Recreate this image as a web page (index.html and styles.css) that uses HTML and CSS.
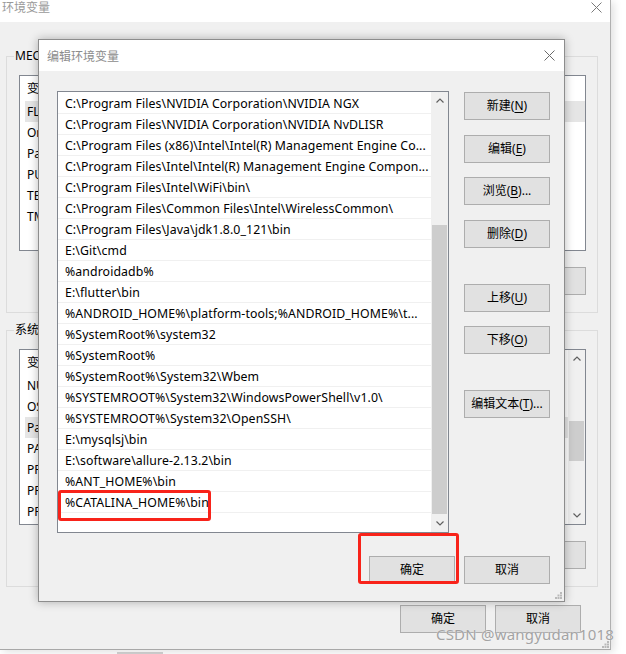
FILE: index.html
```html
<!DOCTYPE html>
<html lang="zh-CN">
<head>
<meta charset="utf-8">
<title>编辑环境变量</title>
<link rel="stylesheet" href="styles.css">
</head>
<body>
<div class="screen">
  <div class="bgwin">
    <div class="bg-titlebar">
      <span class="bg-title">环境变量</span>
      <svg class="close-x" width="11" height="11" viewBox="0 0 11 11"><path d="M0.5 0.5L10.5 10.5M10.5 0.5L0.5 10.5" stroke="#7a7a7a" stroke-width="1" fill="none"/></svg>
    </div>
    <div class="bg-body">
      <fieldset class="group">
        <legend class="group-label">MECHREVO 的用户变量(U)</legend>
        <div class="lv">
          <div class="lv-rows">
            <div class="lv-head">变量</div>
            <div class="lv-row selected">FLUTTER_STORAGE_BASE_URL</div>
            <div class="lv-row">OneDrive</div>
            <div class="lv-row">Path</div>
            <div class="lv-row">PUB_HOSTED_URL</div>
            <div class="lv-row">TEMP</div>
            <div class="lv-row">TMP</div>
          </div>
        </div>
        <div class="group-btns">
          <button class="btn">新建(N)...</button>
          <button class="btn">编辑(E)...</button>
          <button class="btn">删除(D)</button>
        </div>
      </fieldset>
      <fieldset class="group group-sys">
        <legend class="group-label">系统变量(S)</legend>
        <div class="lv">
          <div class="lv-rows">
            <div class="lv-head">变量</div>
            <div class="lv-row">NUMBER_OF_PROCESSORS</div>
            <div class="lv-row">OS</div>
            <div class="lv-row selected">Path</div>
            <div class="lv-row">PATHEXT</div>
            <div class="lv-row">PROCESSOR_ARCHITECTURE</div>
            <div class="lv-row">PROCESSOR_IDENTIFIER</div>
            <div class="lv-row">PROCESSOR_LEVEL</div>
          </div>
          <div class="scrollbar">
            <div class="sb-arrow"><svg width="8" height="5" viewBox="0 0 8 5"><path d="M0.5 4.5L4 1L7.5 4.5" stroke="#606060" stroke-width="1.2" fill="none"/></svg></div>
            <div class="sb-track"><div class="sb-thumb thumb-sys"></div></div>
            <div class="sb-arrow"><svg width="8" height="5" viewBox="0 0 8 5"><path d="M0.5 0.5L4 4L7.5 0.5" stroke="#606060" stroke-width="1.2" fill="none"/></svg></div>
          </div>
        </div>
        <div class="group-btns">
          <button class="btn">新建(W)...</button>
          <button class="btn">编辑(I)...</button>
          <button class="btn">删除(L)</button>
        </div>
      </fieldset>
      <div class="bg-footer">
        <button class="btn">确定</button>
        <button class="btn">取消</button>
      </div>
    </div>
    <svg class="grip bg-grip" width="7" height="7" viewBox="0 0 7 7"><g fill="#b9b9b9"><rect x="5" y="0" width="2" height="2"/><rect x="2.5" y="2.5" width="2" height="2"/><rect x="5" y="2.5" width="2" height="2"/><rect x="0" y="5" width="2" height="2"/><rect x="2.5" y="5" width="2" height="2"/><rect x="5" y="5" width="2" height="2"/></g></svg>
  </div>
  <div class="under"><span class="under-bar"></span></div>

  <div class="dialog">
    <div class="dlg-titlebar">
      <span class="dlg-title">编辑环境变量</span>
      <svg class="close-x" width="11" height="11" viewBox="0 0 11 11"><path d="M0.5 0.5L10.5 10.5M10.5 0.5L0.5 10.5" stroke="#6a6a6a" stroke-width="1" fill="none"/></svg>
    </div>
    <div class="dlg-body">
      <div class="dlg-main">
        <div class="pathlist">
          <div class="pl-rows">
            <div class="pl-row">C:\Program Files\NVIDIA Corporation\NVIDIA NGX</div>
            <div class="pl-row">C:\Program Files\NVIDIA Corporation\NVIDIA NvDLISR</div>
            <div class="pl-row">C:\Program Files (x86)\Intel\Intel(R) Management Engine Co...</div>
            <div class="pl-row">C:\Program Files\Intel\Intel(R) Management Engine Compon...</div>
            <div class="pl-row">C:\Program Files\Intel\WiFi\bin\</div>
            <div class="pl-row">C:\Program Files\Common Files\Intel\WirelessCommon\</div>
            <div class="pl-row">C:\Program Files\Java\jdk1.8.0_121\bin</div>
            <div class="pl-row">E:\Git\cmd</div>
            <div class="pl-row">%androidadb%</div>
            <div class="pl-row">E:\flutter\bin</div>
            <div class="pl-row">%ANDROID_HOME%\platform-tools;%ANDROID_HOME%\t...</div>
            <div class="pl-row">%SystemRoot%\system32</div>
            <div class="pl-row">%SystemRoot%</div>
            <div class="pl-row">%SystemRoot%\System32\Wbem</div>
            <div class="pl-row">%SYSTEMROOT%\System32\WindowsPowerShell\v1.0\</div>
            <div class="pl-row">%SYSTEMROOT%\System32\OpenSSH\</div>
            <div class="pl-row">E:\mysqlsj\bin</div>
            <div class="pl-row">E:\software\allure-2.13.2\bin</div>
            <div class="pl-row">%ANT_HOME%\bin</div>
            <div class="pl-row">%CATALINA_HOME%\bin</div>
            <div class="pl-row"></div>
          </div>
          <div class="scrollbar">
            <div class="sb-arrow"><svg width="8" height="5" viewBox="0 0 8 5"><path d="M0.5 4.5L4 1L7.5 4.5" stroke="#606060" stroke-width="1.2" fill="none"/></svg></div>
            <div class="sb-track"><div class="sb-thumb thumb-path"></div></div>
            <div class="sb-arrow"><svg width="8" height="5" viewBox="0 0 8 5"><path d="M0.5 0.5L4 4L7.5 0.5" stroke="#606060" stroke-width="1.2" fill="none"/></svg></div>
          </div>
        </div>
        <div class="btn-col">
          <button class="btn first">新建(<u>N</u>)</button>
          <button class="btn sp15">编辑(<u>E</u>)</button>
          <button class="btn sp14">浏览(<u>B</u>)...</button>
          <button class="btn sp15">删除(<u>D</u>)</button>
          <button class="btn sp36">上移(<u>U</u>)</button>
          <button class="btn sp14">下移(<u>O</u>)</button>
          <button class="btn sp36">编辑文本(<u>T</u>)...</button>
        </div>
      </div>
      <div class="dlg-footer">
        <button class="btn">确定</button>
        <button class="btn">取消</button>
      </div>
    </div>
    <svg class="grip dlg-grip" width="7" height="7" viewBox="0 0 7 7"><g fill="#b9b9b9"><rect x="5" y="0" width="2" height="2"/><rect x="2.5" y="2.5" width="2" height="2"/><rect x="5" y="2.5" width="2" height="2"/><rect x="0" y="5" width="2" height="2"/><rect x="2.5" y="5" width="2" height="2"/><rect x="5" y="5" width="2" height="2"/></g></svg>
  </div>

  <div class="mark mark-row"></div>
  <div class="mark mark-ok"></div>
  <div class="watermark">CSDN @wangyudan1018</div>
</div>
</body>
</html>
```

FILE: styles.css
```css
* { box-sizing: border-box; }
html, body { margin: 0; padding: 0; }
body {
  width: 626px;
  height: 654px;
  overflow: hidden;
  background: #fff;
  font-family: "Noto Sans", "Noto Sans CJK SC", sans-serif;
  font-size: 12px;
  color: #000;
}
.screen { position: relative; width: 626px; height: 654px; overflow: hidden; }

/* ---------- background window ---------- */
.bgwin {
  position: relative;
  width: 611px;
  height: 650px;
  background: #f0f0f0;
  border-right: 1px solid #b0b0b0;
  border-bottom: 1px solid #a8a8a8;
  box-shadow: 3px 2px 8px rgba(0,0,0,0.12);
  display: flex;
  flex-direction: column;
}
.bg-titlebar {
  height: 22px;
  background: #fff;
  display: flex;
  justify-content: space-between;
  align-items: flex-start;
  padding: 0 8px 0 2px;
}
.bg-title { font-size: 12px; line-height: 15px; color: #9a9a9a; }
.bg-titlebar .close-x { margin-top: 2px; }

.bg-body {
  flex: 1;
  display: flex;
  flex-direction: column;
  padding: 26px 12px 0 6px;
}
.group {
  margin: 0;
  min-width: 0;
  border: 1px solid #dcdcdc;
  padding: 0 11px 17px 12px;
}
.group-sys { margin-top: 9px; }
.group-label {
  padding: 0 1px;
  margin-left: -5px;
  line-height: 16px;
  font-size: 12px;
}
.lv {
  margin-top: 11px;
  height: 176px;
  background: #fff;
  border: 1px solid #828790;
  display: flex;
  overflow: hidden;
}
.lv-rows { flex: 1; min-width: 0; }
.lv-head { height: 25px; line-height: 25px; padding-left: 7px; white-space: nowrap; }
.lv-row {
  height: 21px;
  line-height: 21px;
  margin-left: 5px;
  padding-left: 2px;
  white-space: nowrap;
}
.lv-row.selected { background: #e5e5e5; }
.group-btns {
  margin-top: 16px;
  display: flex;
  justify-content: flex-end;
  gap: 9px;
}
.bg-footer {
  margin-top: 18px;
  display: flex;
  justify-content: flex-end;
  gap: 9px;
  padding-right: 17px;
}
.grip { position: absolute; }
.bg-grip { right: 1px; bottom: 1px; }

.under { height: 4px; padding-left: 117px; padding-top: 2px; }
.under-bar { display: block; width: 46px; height: 2px; background: #d4d4d4; }

/* ---------- buttons ---------- */
.btn {
  width: 86px;
  height: 28px;
  margin: 0;
  padding: 0;
  border: 1px solid #adadad;
  background: #e1e1e1;
  font-family: "Noto Sans", "Noto Sans CJK SC", sans-serif;
  font-size: 12px;
  color: #000;
  line-height: 26px;
  text-align: center;
  white-space: nowrap;
}
.btn u { text-underline-offset: 2px; }

/* ---------- scrollbars ---------- */
.scrollbar {
  width: 17px;
  flex: none;
  background: #f0f0f0;
  display: flex;
  flex-direction: column;
}
.sb-arrow {
  height: 17px;
  display: flex;
  align-items: center;
  justify-content: center;
  flex: none;
}
.sb-track { flex: 1; }
.sb-thumb { margin: 0 1px; background: #cdcdcd; }
.thumb-sys { margin-top: 54px; height: 40px; }
.thumb-path { margin-top: 116px; height: 289px; }

/* ---------- edit dialog ---------- */
.dialog {
  position: absolute;
  left: 38px;
  top: 39px;
  width: 527px;
  height: 563px;
  border: 1px solid #8d8d8d;
  box-shadow: 0 0 9px rgba(0,0,0,0.28);
  display: flex;
  flex-direction: column;
  background: #f0f0f0;
}
.dlg-titlebar {
  height: 31px;
  background: #fff;
  display: flex;
  justify-content: space-between;
  align-items: center;
  padding: 0 9px 0 8px;
  flex: none;
}
.dlg-title { font-size: 12px; color: #8c8c8c; }
.dlg-body {
  flex: 1;
  display: flex;
  flex-direction: column;
  padding: 20px 14px 17px 18px;
}
.dlg-main { display: flex; gap: 15px; }
.pathlist {
  width: 392px;
  height: 442px;
  background: #fff;
  border: 1px solid #828790;
  display: flex;
  overflow: hidden;
}
.pl-rows { flex: 1; min-width: 0; padding-top: 1px; }
.pl-row {
  height: 21px;
  line-height: 21px;
  border-bottom: 1px solid #f0f0f0;
  padding-left: 7px;
  font-size: 12.3px;
  letter-spacing: 0.1px;
  white-space: nowrap;
  overflow: hidden;
}
.btn-col { width: 86px; display: flex; flex-direction: column; }
.btn-col .first { margin-top: 1px; }
.btn-col .sp14 { margin-top: 14px; }
.btn-col .sp15 { margin-top: 15px; }
.btn-col .sp36 { margin-top: 36px; }
.dlg-footer {
  margin-top: 23px;
  display: flex;
  justify-content: flex-end;
  gap: 9px;
}
.dlg-grip { right: 2px; bottom: 2px; }

/* ---------- annotations ---------- */
.mark {
  position: absolute;
  border: 3px solid #f8231a;
  border-radius: 3px;
}
.mark-row { left: 58px; top: 490px; width: 153px; height: 31px; }
.mark-ok { left: 358px; top: 533px; width: 101px; height: 51px; }

.watermark {
  position: absolute;
  left: 436px;
  top: 625px;
  font-size: 15px;
  line-height: 18px;
  letter-spacing: 0.2px;
  color: #a3a3a3;
  text-shadow: 0 0 1px rgba(255,255,255,0.9);
  white-space: nowrap;
}
```
